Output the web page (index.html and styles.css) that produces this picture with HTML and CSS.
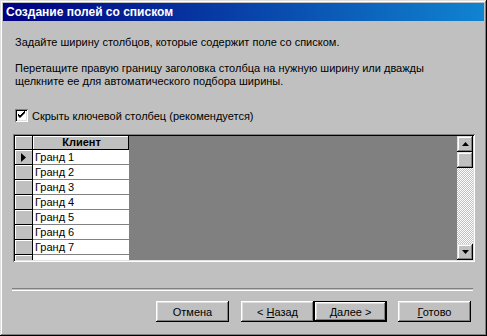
FILE: index.html
```html
<!DOCTYPE html>
<html lang="ru">
<head>
    <meta charset="UTF-8">
    <title>Создание полей со списком</title>
    <link rel="stylesheet" href="styles.css">
</head>
<body>
    <div class="window">
        <div class="titlebar">Создание полей со списком</div>
        <div class="body">
            <p class="text first">Задайте ширину столбцов, которые содержит поле со списком.</p>
            <p class="text second">Перетащите правую границу заголовка столбца на нужную ширину или дважды<br>щелкните ее для автоматического подбора ширины.</p>

            <label class="check-row">
                <span class="checkbox">
                    <svg width="9" height="9" viewBox="0 0 9 9"><path d="M1 3v2l2 2 5-5v-2l-5 5z" fill="#000"/><path d="M1 3l2 2 5-5" stroke="#000" fill="none"/></svg>
                </span>
                Скрыть ключевой столбец (рекомендуется)
            </label>

            <div class="grid">
                <div class="sheet">
                    <div class="row head">
                        <div class="sel"></div>
                        <div class="cell">Клиент</div>
                    </div>
                    <div class="row">
                        <div class="sel"><svg width="5" height="9" viewBox="0 0 5 9"><path d="M0 0l5 4.5-5 4.5z" fill="#000"/></svg></div>
                        <div class="cell">Гранд 1</div>
                    </div>
                    <div class="row"><div class="sel"></div><div class="cell">Гранд 2</div></div>
                    <div class="row"><div class="sel"></div><div class="cell">Гранд 3</div></div>
                    <div class="row"><div class="sel"></div><div class="cell">Гранд 4</div></div>
                    <div class="row"><div class="sel"></div><div class="cell">Гранд 5</div></div>
                    <div class="row"><div class="sel"></div><div class="cell">Гранд 6</div></div>
                    <div class="row"><div class="sel"></div><div class="cell">Гранд 7</div></div>
                    <div class="row"><div class="sel"></div><div class="cell"></div></div>
                </div>
                <div class="scrollbar">
                    <div class="sb-btn"><svg width="7" height="4" viewBox="0 0 7 4"><path d="M3.5 0l3.5 4h-7z" fill="#000"/></svg></div>
                    <div class="sb-btn"></div>
                    <div class="sb-track"></div>
                    <div class="sb-btn"><svg width="7" height="4" viewBox="0 0 7 4"><path d="M0 0h7l-3.5 4z" fill="#000"/></svg></div>
                </div>
            </div>

            <div class="separator"></div>

            <div class="buttons">
                <button class="btn">Отмена</button>
                <button class="btn back">&lt; <u>Н</u>азад</button>
                <button class="btn default"><u>Д</u>алее &gt;</button>
                <button class="btn finish"><u>Г</u>отово</button>
            </div>
        </div>
    </div>
</body>
</html>
```

FILE: styles.css
```css
body {
    margin: 0;
    font-family: 'Liberation Sans', Arial, sans-serif;
    font-size: 11px;
    color: #000;
}
.window {
    width: 487px;
    height: 336px;
    box-sizing: border-box;
    padding: 3px;
    background-color: #c0c0c0;
    box-shadow: inset -1px -1px #000, inset 1px 1px #dfdfdf, inset -2px -2px #808080, inset 2px 2px #fff;
    overflow: hidden;
}
.titlebar {
    height: 18px;
    line-height: 18px;
    padding-left: 3px;
    color: #fff;
    font-weight: bold;
    font-size: 12px;
    background: linear-gradient(to right, #000080, #1084d0);
}
.body {
    padding: 0 9px 0 10px;
}
.text {
    margin: 0 0 0 2px;
    line-height: 13px;
}
.first {
    margin-top: 15px;
}
.second {
    margin-top: 13px;
}
.check-row {
    display: flex;
    align-items: center;
    height: 13px;
    margin: 21px 0 0 2px;
}
.checkbox {
    width: 13px;
    height: 13px;
    box-sizing: border-box;
    margin-right: 4px;
    background-color: #fff;
    box-shadow: inset 1px 1px #808080, inset -1px -1px #fff, inset 2px 2px #000, inset -2px -2px #dfdfdf;
    display: flex;
    align-items: center;
    justify-content: center;
}

/* Datasheet */
.grid {
    margin-top: 12px;
    width: 462px;
    height: 128px;
    box-sizing: border-box;
    padding: 2px;
    display: flex;
    box-shadow: inset 1px 1px #808080, inset -1px -1px #fff, inset 2px 2px #000, inset -2px -2px #dfdfdf;
}
.sheet {
    flex: 1;
    background-color: #808080;
    overflow: hidden;
}
.row {
    display: flex;
    height: 15px;
}
.row.head {
    height: 14px;
}
.sel {
    width: 18px;
    background-color: #c0c0c0;
    border-right: 1px solid #000;
    border-bottom: 1px solid #000;
    box-sizing: border-box;
    display: flex;
    align-items: center;
    justify-content: center;
    box-shadow: inset 1px 1px #fff;
}
.cell {
    width: 96px;
    padding-left: 2px;
    box-sizing: border-box;
    background-color: #fff;
    border-bottom: 1px solid #808080;
    line-height: 14px;
}
.head .sel {
    height: 14px;
}
.head .cell {
    background-color: #c0c0c0;
    font-weight: bold;
    text-align: center;
    border-right: 1px solid #000;
    border-bottom: 1px solid #000;
    box-shadow: inset 1px 1px #fff;
    line-height: 13px;
}
.scrollbar {
    width: 16px;
    display: flex;
    flex-direction: column;
}
.sb-btn {
    height: 16px;
    background-color: #c0c0c0;
    box-shadow: inset -1px -1px #000, inset 1px 1px #dfdfdf, inset -2px -2px #808080, inset 2px 2px #fff;
    display: flex;
    align-items: center;
    justify-content: center;
}
.sb-track {
    flex: 1;
    background-image: conic-gradient(#fff 90deg, #c0c0c0 90deg 180deg, #fff 180deg 270deg, #c0c0c0 270deg);
    background-size: 2px 2px;
}

.separator {
    margin: 26px 2px 0 -1px;
    height: 1px;
    border-top: 1px solid #808080;
    border-bottom: 1px solid #fff;
}
.buttons {
    display: flex;
    justify-content: flex-end;
    margin-top: 10px;
    padding-right: 4px;
}
.btn {
    width: 73px;
    height: 21px;
    padding: 0;
    border: none;
    font-family: inherit;
    font-size: 11px;
    color: #000;
    background-color: #c0c0c0;
    box-shadow: inset -1px -1px #000, inset 1px 1px #fff, inset -2px -2px #808080, inset 2px 2px #dfdfdf;
    margin-left: 12px;
}
.back {
    margin-left: 12px;
}
.default {
    margin-left: 0;
    border: 1px solid #000;
}
.finish {
    margin-left: 11px;
}
```
